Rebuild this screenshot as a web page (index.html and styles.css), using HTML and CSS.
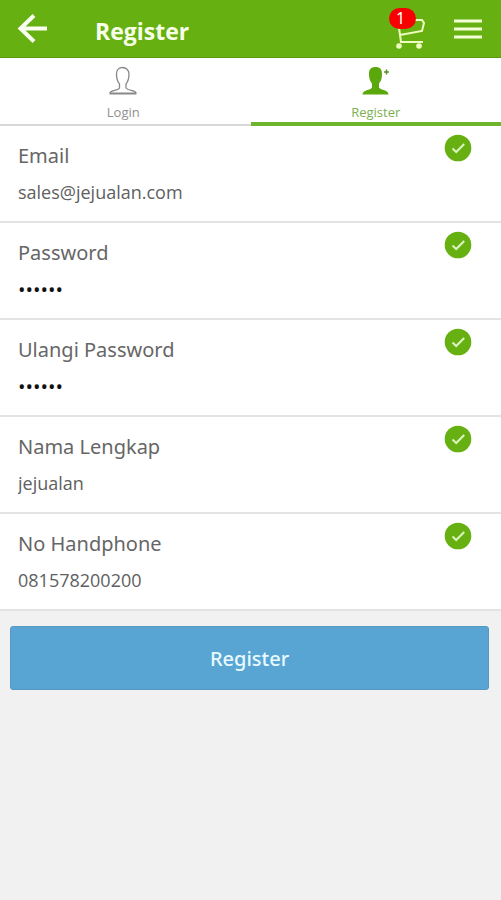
FILE: index.html
```html
<!DOCTYPE html>
<html lang="id">
<head>
<meta charset="utf-8">
<meta name="viewport" content="width=device-width, initial-scale=1">
<title>Register</title>
<link rel="stylesheet" href="styles.css">
</head>
<body>
<svg class="symbols" aria-hidden="true">
  <symbol id="check" viewBox="0 0 28 28">
    <circle cx="14" cy="14" r="13.3" fill="#66b012"/>
    <path d="M8.5 14.5l3.7 3.5 8-8" fill="none" stroke="#dcf5c0" stroke-width="2"/>
  </symbol>
</svg>
<header class="topbar">
  <button class="icon-button" type="button" aria-label="Kembali">
    <svg width="32" height="32" viewBox="0 0 32 32" fill="none" stroke="#fbfff0" stroke-width="4"><path d="M31 15.500H5M18 2.500L4.500 15.500 18 28.500"/></svg>
  </button>
  <h1 class="title">Register</h1>
  <a class="cart" href="#" aria-label="Keranjang">
    <svg width="34" height="34" viewBox="0 0 34 34" fill="none" stroke="#effcc0" stroke-width="2"><path d="M1 6h4l3 21h22M7 20l22-4 2-8-2-3H14"/><circle cx="6" cy="31" r="2.800" fill="#effcc0" stroke="none"/><circle cx="26" cy="31" r="2.800" fill="#effcc0" stroke="none"/></svg>
    <span class="badge">1</span>
  </a>
  <button class="icon-button" type="button" aria-label="Menu">
    <svg width="30" height="22" viewBox="0 0 30 22" stroke="#f4ffd8" stroke-width="3"><path d="M1 3h28M1 11h28M1 19h28"/></svg>
  </button>
</header>
<nav class="tabs">
  <a class="tab" href="#">
    <svg width="30" height="30" viewBox="0 0 30 30" fill="none" stroke="#888"><path stroke-width="1.300" d="M2 27c1-3 8-2 9.500-5v-4C9 15 8.500 12 8.500 8c0-4 2.500-6.500 6-6.500S21 4 21 8c0 4-.5 7-3 10v4c2 3 9 2 10 5"/><path stroke-width="2" d="M1.500 27.500h27"/></svg>
    Login
  </a>
  <a class="tab active" href="#" aria-current="page">
    <svg width="30" height="30" viewBox="0 0 30 30"><path fill="#5ba80c" d="M1.500 28.500c0-5 8-4 9.500-7v-4C8.500 14.500 8 12 8 7.500 8 3 10.500 1 14.500 1S21 3 21 7.500c0 4.500-.5 7-3 10v4c2 3 9.500 2 9.500 7z"/><path d="M25.500 3.500v5M23 6h5" stroke="#5c8c2c" stroke-width="1.500"/></svg>
    Register
  </a>
</nav>
<form class="form">
  <div class="field">
    <label for="email">Email</label>
    <input id="email" type="email" value="sales@jejualan.com">
    <svg class="check"><use href="#check"/></svg>
  </div>
  <div class="field">
    <label for="password">Password</label>
    <input id="password" type="password" value="123456">
    <svg class="check"><use href="#check"/></svg>
  </div>
  <div class="field">
    <label for="repeat">Ulangi Password</label>
    <input id="repeat" type="password" value="123456">
    <svg class="check"><use href="#check"/></svg>
  </div>
  <div class="field">
    <label for="name">Nama Lengkap</label>
    <input id="name" type="text" value="jejualan">
    <svg class="check"><use href="#check"/></svg>
  </div>
  <div class="field">
    <label for="phone">No Handphone</label>
    <input id="phone" type="tel" value="081578200200">
    <svg class="check"><use href="#check"/></svg>
  </div>
  <button class="submit" type="submit">Register</button>
</form>
</body>
</html>
```
FILE: styles.css
```css
* { box-sizing: border-box; }

body {
  margin: 0;
  background: #f1f1f1;
  color: #666;
  font-family: "Noto Sans", "Open Sans", sans-serif;
}

button, input { font-family: inherit; }
.symbols { display: none; }
svg { display: block; }

.topbar {
  display: flex;
  align-items: center;
  height: 58px;
  padding: 0 18px 0 16px;
  background: #66b012;
  border-bottom: 1px solid #579a0c;
}

.icon-button {
  padding: 0;
  border: 0;
  background: none;
}

.title {
  flex: 1;
  margin: 4px 0 0 47px;
  color: #f8ffe8;
  font-family: "Open Sans", sans-serif;
  font-size: 23px;
  line-height: 32px;
  font-weight: 700;
}

.cart {
  position: relative;
  margin: 6px 26px 0 0;
}

.badge {
  position: absolute;
  top: -7px;
  left: -4px;
  width: 27px;
  height: 21px;
  border-radius: 11px;
  background: #f80000;
  color: #fff;
  font-size: 16px;
  line-height: 21px;
  padding-right: 4px;
  text-align: center;
}

.tabs {
  display: grid;
  grid-template-columns: 1fr 1fr;
  background: #fff;
}

.tab {
  display: flex;
  flex-direction: column;
  align-items: center;
  gap: 8px;
  height: 68px;
  padding-top: 8px;
  padding-right: 4px;
  border-bottom: 2px solid #d8d8d8;
  color: #909090;
  font-family: "Open Sans", sans-serif;
  font-size: 13px;
  line-height: 16px;
  text-decoration: none;
}

.tab.active {
  padding-right: 0;
  border-bottom: 4px solid #6eb42c;
  color: #7dae50;
}

.field {
  display: grid;
  grid-template-columns: 1fr 28px;
  align-content: start;
  height: 97px;
  padding: 8px 29px 0 18px;
  background: #fff;
  border-bottom: 2px solid #e3e3e3;
}

.field label {
  padding-top: 6px;
  font-size: 20px;
  line-height: 32px;
}

.field input {
  grid-column: 1;
  height: 40px;
  padding: 0;
  border: 0;
  outline: 0;
  background: none;
  color: #606060;
  font-family: "Open Sans", sans-serif;
  font-size: 18px;
}

.field input[type="password"] {
  color: #111;
  font-size: 20px;
}

.check {
  grid-column: 2;
  grid-row: 1;
  width: 28px;
  height: 28px;
}

.submit {
  display: block;
  width: calc(100% - 22px);
  height: 64px;
  margin: 15px 12px 15px 10px;
  padding: 0;
  border: 1px solid #5598c4;
  border-radius: 3px;
  background: #58a5d4;
  color: #e8faff;
  font-size: 20px;
  font-weight: 500;
}
```
